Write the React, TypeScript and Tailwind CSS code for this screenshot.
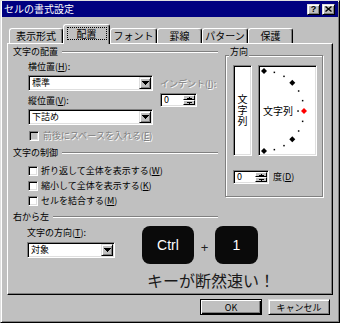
import type { ReactNode } from 'react';

const sunken =
  'border border-t-[#808080] border-l-[#808080] border-r-white border-b-white shadow-[inset_1px_1px_0_#000,inset_-1px_-1px_0_#dfdfdf]';
const raised =
  'border border-t-[#dfdfdf] border-l-[#dfdfdf] border-r-black border-b-black shadow-[inset_1px_1px_0_#fff,inset_-1px_-1px_0_#808080]';
const raisedThin = 'border border-t-white border-l-white border-r-black border-b-black';

const U = ({ children }: { children: ReactNode }) => (
  <span className="underline decoration-1 underline-offset-[1px]">{children}</span>
);

const DownArrow = () => (
  <svg width="7" height="4" viewBox="0 0 7 4" shapeRendering="crispEdges">
    <path d="M0 0h7v1h-1v1h-1v1h-1v1h-1v-1h-1v-1h-1v-1h-1z" fill="#000" />
  </svg>
);

const Section = ({ label, className = '' }: { label: string; className?: string }) => (
  <div className={`flex h-[12px] w-[210px] items-center pl-[5px] ${className}`}>
    <span className="leading-[12px]">{label}</span>
    <div className="ml-[4px] h-[2px] flex-1 border-t border-b border-t-[#808080] border-b-white" />
  </div>
);

const Combo = ({ value, width }: { value: string; width: string }) => (
  <div className={`flex h-[16px] ${width} bg-white p-[1px] ${sunken}`}>
    <div className="flex-1 pl-[2px] leading-[12px]">{value}</div>
    <div className={`flex w-[12px] items-center justify-center bg-[#c0c0c0] ${raised}`}>
      <DownArrow />
    </div>
  </div>
);

const Spinner = ({ width }: { width: string }) => (
  <div className={`flex h-[14px] ${width} bg-white p-[1px] ${sunken}`}>
    <div className="flex-1 pl-[2px] leading-[10px]">0</div>
    <div className="flex w-[12px] flex-col">
      <div className={`flex h-[5px] items-center justify-center bg-[#c0c0c0] ${raisedThin}`}>
        <svg width="5" height="2" viewBox="0 0 5 2" shapeRendering="crispEdges">
          <path d="M2 0h1v1h2v1h-5v-1h2z" fill="#000" />
        </svg>
      </div>
      <div className={`flex h-[5px] items-center justify-center bg-[#c0c0c0] ${raisedThin}`}>
        <svg width="5" height="2" viewBox="0 0 5 2" shapeRendering="crispEdges">
          <path d="M0 0h5v1h-2v1h-1v-1h-2z" fill="#000" />
        </svg>
      </div>
    </div>
  </div>
);

const CheckRow = ({ children, disabled = false }: { children: ReactNode; disabled?: boolean }) => (
  <div className={`flex h-[12px] items-center ${disabled ? 'ml-[21px]' : 'ml-[20px]'}`}>
    <div className={`h-[10px] w-[10px] ${sunken} ${disabled ? 'bg-[#c0c0c0]' : 'bg-white'}`} />
    <span
      className={`leading-[12px] ${disabled ? 'ml-[4px] text-[#808080] [text-shadow:1px_1px_0_#fff]' : 'ml-[3px]'}`}
    >
      {children}
    </span>
  </div>
);

const Tab = ({ label, width, active = false }: { label: string; width: string; active?: boolean }) =>
  active ? (
    <div
      className={`relative z-10 -mb-[1px] flex h-[20px] ${width} items-center justify-center rounded-t-[3px] border-t border-l border-r border-t-white border-l-white border-r-black bg-[#c0c0c0] pb-[2px] text-[10px] shadow-[inset_-1px_0_0_#808080]`}
    >
      <span className="flex h-[13px] items-center border border-dotted border-black px-[9px] leading-none">
        {label}
      </span>
    </div>
  ) : (
    <div
      className={`flex h-[15px] ${width} items-center justify-center rounded-t-[3px] border-t border-l border-r border-t-white border-l-white border-r-black text-[10px] leading-[10px] shadow-[inset_-1px_0_0_#808080]`}
    >
      {label}
    </div>
  );

// dots of the orientation half circle, center (4,44) radius 40
const smallDots = [75, 60, 30, 15, -15, -30, -60, -75].map((a) => {
  const r = (a * Math.PI) / 180;
  return [4 + 40 * Math.cos(r), 44 - 40 * Math.sin(r)];
});
const bigDots = [90, 45, -45, -90].map((a) => {
  const r = (a * Math.PI) / 180;
  return [4 + 40 * Math.cos(r), 44 - 40 * Math.sin(r)];
});
const diamond = (x: number, y: number) => `M${x} ${y - 3}L${x + 3} ${y}L${x} ${y + 3}L${x - 3} ${y}Z`;

export default function App() {
  return (
    <div className="h-[323px] w-[340px] border border-t-[#dfdfdf] border-l-[#dfdfdf] border-r-black border-b-black bg-[#c0c0c0] font-['Noto_Sans_CJK_JP',sans-serif] text-[9px] text-black shadow-[inset_1px_1px_0_#fff,inset_-1px_-1px_0_#808080]">
      {/* title bar */}
      <div className="mx-[1px] flex h-[16px] items-center bg-[#000080] pr-[3px] pl-[2px]">
        <span className="text-[10px] leading-none text-white">セルの書式設定</span>
        <div className="ml-auto flex gap-[2px]">
          <div className={`flex h-[11px] w-[13px] items-center justify-center bg-[#c0c0c0] ${raised}`}>
            <span className="font-['Liberation_Sans',sans-serif] text-[9px] leading-none font-bold">?</span>
          </div>
          <div className={`flex h-[11px] w-[13px] items-center justify-center bg-[#c0c0c0] ${raised}`}>
            <svg width="7" height="6" viewBox="0 0 7 6">
              <path d="M0.5 0.5L6.5 5.5M6.5 0.5L0.5 5.5" stroke="#000" strokeWidth="1.4" />
            </svg>
          </div>
        </div>
      </div>

      {/* tabs */}
      <div className="mt-[7px] flex h-[19px] items-end pl-[8px]">
        <Tab label="表示形式" width="w-[54px]" />
        <Tab label="配置" width="w-[47px]" active />
        <Tab label="フォント" width="w-[47px]" />
        <Tab label="罫線" width="w-[45px]" />
        <Tab label="パターン" width="w-[46px]" />
        <Tab label="保護" width="w-[45px]" />
      </div>

      {/* tab panel */}
      <div className="ml-[6px] h-[252px] w-[326px] border border-t-white border-l-white border-r-black border-b-black shadow-[inset_-1px_-1px_0_#808080]">
        <div className="flex items-start">
          <div className="w-[210px]">
            <Section label="文字の配置" className="mt-[2px]" />
            <div className="mt-[3px] flex">
              <div className="ml-[20px] w-[125px]">
                <div className="h-[12px] leading-[12px]">
                  横位置(<U>H</U>):
                </div>
                <Combo value="標準" width="w-[125px] mt-[2px]" />
                <div className="mt-[4px] h-[12px] leading-[12px]">
                  縦位置(<U>V</U>):
                </div>
                <Combo value="下詰め" width="w-[125px] mt-[2px]" />
              </div>
              <div className="ml-[7px]">
                <div className="mt-[17px] h-[12px] leading-[12px] text-[#808080] [text-shadow:1px_1px_0_#fff]">
                  インデント(<U>I</U>):
                </div>
                <Spinner width="w-[37px] mt-[3px]" />
              </div>
            </div>
            <div className="mt-[5px]">
              <CheckRow disabled>
                前後にスペースを入れる(<U>E</U>)
              </CheckRow>
            </div>
            <Section label="文字の制御" className="mt-[5px]" />
            <div className="mt-[6px] flex flex-col gap-[3px]">
              <CheckRow>
                折り返して全体を表示する(<U>W</U>)
              </CheckRow>
              <CheckRow>
                縮小して全体を表示する(<U>K</U>)
              </CheckRow>
              <CheckRow>
                セルを結合する(<U>M</U>)
              </CheckRow>
            </div>
          </div>

          {/* orientation group */}
          <div className="relative mt-[11px] ml-[7px] h-[142px] w-[98px] border border-[#808080] shadow-[inset_1px_1px_0_#fff,1px_1px_0_#fff]">
            <span className="absolute -top-[10px] left-[3px] bg-[#c0c0c0] px-[1px] leading-[12px]">方向</span>
            <div className="mt-[9px] ml-[7px] flex gap-[6px]">
              <div className={`flex h-[91px] w-[19px] items-center justify-center bg-white ${sunken}`}>
                <span className="text-[10px] leading-[15px] tracking-[1px] [writing-mode:vertical-rl]">文字列</span>
              </div>
              <div className={`relative flex h-[91px] w-[59px] items-center bg-white pl-[4px] ${sunken}`}>
                <svg className="absolute top-[1px] left-[1px]" width="55" height="87" viewBox="0 0 55 87">
                  {smallDots.map(([x, y], i) => (
                    <rect key={i} x={x - 0.75} y={y - 0.75} width="1.5" height="1.5" fill="#000" />
                  ))}
                  <rect x="37.3" y="43.3" width="1.5" height="1.5" fill="#000" />
                  {bigDots.map(([x, y], i) => (
                    <path key={i} d={diamond(x, y)} fill="#000" />
                  ))}
                  <path d={diamond(44, 44)} fill="#ff0000" />
                </svg>
                <span className="relative text-[10px] leading-[12px]">文字列</span>
              </div>
            </div>
            <div className="mt-[14px] ml-[7px] flex items-center">
              <Spinner width="w-[36px]" />
              <span className="ml-[4px] leading-[12px]">
                度(<U>D</U>)
              </span>
            </div>
          </div>
        </div>

        <Section label="右から左" className="mt-[4px]" />
        <div className="mt-[3px] flex">
          <div className="w-[134px] pl-[19px]">
            <div className="mt-[1px] h-[12px] leading-[12px]">
              文字の方向(<U>T</U>):
            </div>
            <Combo value="対象" width="w-[88px] mt-[3px]" />
          </div>
          <div>
            <div className="flex h-[38px] font-['Liberation_Sans',sans-serif] text-[14px] text-white">
              <div className="flex w-[52px] items-center justify-center rounded-[8px] bg-[#0a0a0a]">Ctrl</div>
              <div className="flex w-[21px] items-center justify-center pt-[6px] text-[13px] text-[#222]">+</div>
              <div className="flex w-[43px] items-center justify-center rounded-[8px] bg-[#0a0a0a]">1</div>
            </div>
            <div className="mt-[8px] ml-[5px] text-[16px] leading-[16px] whitespace-nowrap text-[#1a1a1a]">
              キーが断然速い！
            </div>
          </div>
        </div>
      </div>

      {/* buttons */}
      <div className="mt-[4px] ml-[199px] flex gap-[6px]">
        <div className="flex h-[16px] w-[62px] items-center justify-center border border-black bg-[#c0c0c0] leading-none shadow-[inset_1px_1px_0_#fff,inset_-1px_-1px_0_#000,inset_-2px_-2px_0_#808080]">
          OK
        </div>
        <div className={`flex h-[16px] w-[62px] items-center justify-center bg-[#c0c0c0] leading-none ${raised}`}>
          キャンセル
        </div>
      </div>
    </div>
  );
}
